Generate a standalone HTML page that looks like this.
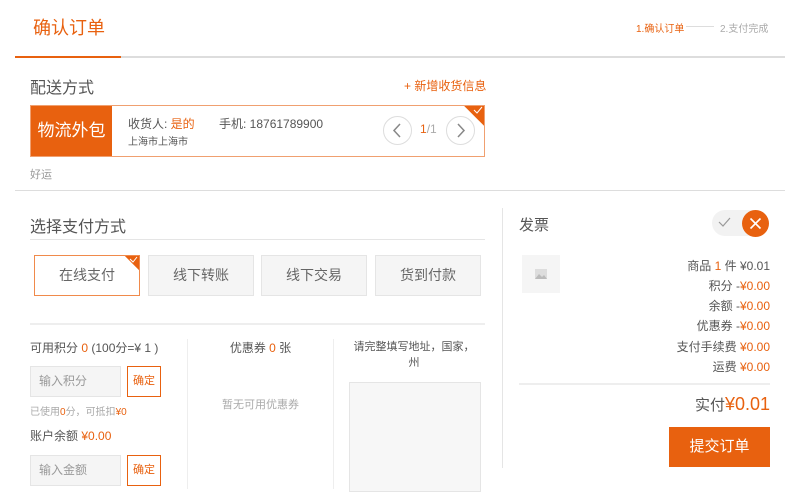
<!DOCTYPE html>
<html><head><meta charset="utf-8"><style>
*{margin:0;padding:0;box-sizing:border-box}
body{width:800px;height:489px;overflow:hidden;background:#fff;font-family:"Liberation Sans","Noto Sans CJK SC",sans-serif;color:#555;position:relative}
.a{position:absolute;white-space:nowrap}
.o{color:#e8610f}
.btn{position:absolute;border:1px solid #e5e5e5;background:#f5f5f5;font-size:14px;color:#666;text-align:center;line-height:38px}
.inp{position:absolute;background:#f5f5f5;border:1px solid #e5e5e5;font-size:12px;color:#999;padding-left:8px;line-height:28px}
.ok{position:absolute;border:1px solid #e8610f;color:#e8610f;font-size:11px;text-align:center;line-height:28px;background:#fff}
.r{position:absolute;right:30px;font-size:12px;color:#555;text-align:right}
</style></head><body>
<div class="a o" style="left:33px;top:14px;font-size:18px">确认订单</div>
<div class="a o" style="left:636px;top:20px;font-size:10px">1.确认订单</div>
<div class="a" style="left:686px;top:26px;width:28px;height:1px;background:#ddd"></div>
<div class="a" style="left:720px;top:20px;font-size:10px;color:#aaa">2.支付完成</div>
<div class="a" style="left:15px;top:56px;width:770px;height:2px;background:#ddd"></div>
<div class="a" style="left:15px;top:56px;width:106px;height:2px;background:#e8610f"></div>

<div class="a" style="left:30px;top:74px;font-size:16px;color:#555">配送方式</div>
<div class="a o" style="left:404px;top:77px;font-size:12px">+ 新增收货信息</div>
<div class="a" style="left:30px;top:105px;width:455px;height:52px;border:1px solid #f0a070;overflow:hidden">
<div class="a" style="left:0;top:0;width:81px;height:50px;background:#e8610f;color:#fff;font-size:17px;line-height:50px;text-align:center">物流外包</div>
<div class="a" style="left:97px;top:9px;font-size:12px;color:#555">收货人: <span class="o">是的</span></div>
<div class="a" style="left:188px;top:9px;font-size:12px;color:#555">手机: 18761789900</div>
<div class="a" style="left:97px;top:27px;font-size:10px;color:#555">上海市上海市</div>
<div class="a" style="left:352px;top:10px;width:29px;height:29px;border:1px solid #ddd;border-radius:50%"><svg width="27" height="27"><path d="M16 7l-6 6.5 6 6.5" fill="none" stroke="#888" stroke-width="1.5"/></svg></div>
<div class="a" style="left:389px;top:16px;font-size:12px"><span class="o">1</span><span style="color:#aaa">/1</span></div>
<div class="a" style="left:415px;top:10px;width:29px;height:29px;border:1px solid #ddd;border-radius:50%"><svg width="27" height="27"><path d="M11 7l6 6.5-6 6.5" fill="none" stroke="#888" stroke-width="1.5"/></svg></div>
<div class="a" style="right:-14px;top:-14px;width:28px;height:28px;background:#e8610f;transform:rotate(45deg)"></div>
<svg class="a" style="right:0;top:0" width="12" height="10"><path d="M2 4l3 3 5-6" fill="none" stroke="#fff" stroke-width="1"/></svg>
</div>
<div class="a" style="left:30px;top:166px;font-size:11px;color:#999">好运</div>
<div class="a" style="left:15px;top:190px;width:770px;height:1px;background:#ddd"></div>

<div class="a" style="left:30px;top:213px;font-size:16px;color:#555">选择支付方式</div>
<div class="a" style="left:30px;top:239px;width:455px;height:1px;background:#e5e5e5"></div>
<div class="btn" style="left:34px;top:255px;width:106px;height:41px;border-color:#f08a4b;background:#fff;overflow:hidden">在线支付<div class="a" style="right:-10px;top:-10px;width:20px;height:20px;background:#e8610f;transform:rotate(45deg)"></div><svg class="a" style="right:0;top:0" width="10" height="8"><path d="M1 3l3 3 4-5" fill="none" stroke="#fff" stroke-width="1"/></svg></div>
<div class="btn" style="left:148px;top:255px;width:106px;height:41px">线下转账</div>
<div class="btn" style="left:261px;top:255px;width:106px;height:41px">线下交易</div>
<div class="btn" style="left:375px;top:255px;width:106px;height:41px">货到付款</div>
<div class="a" style="left:30px;top:323px;width:455px;height:2px;background:#eee"></div>

<div class="a" style="left:30px;top:339px;font-size:12px">可用积分 <span class="o">0</span> (100分=¥ 1 )</div>
<div class="inp" style="left:30px;top:366px;width:91px;height:31px">输入积分</div>
<div class="ok" style="left:127px;top:366px;width:34px;height:31px">确定</div>
<div class="a" style="left:30px;top:403px;font-size:10px;color:#aaa">已使用<span class="o">0</span>分，可抵扣<span class="o">¥0</span></div>
<div class="a" style="left:30px;top:427px;font-size:12px">账户余额 <span class="o">¥0.00</span></div>
<div class="inp" style="left:30px;top:455px;width:91px;height:31px">输入金额</div>
<div class="ok" style="left:127px;top:455px;width:34px;height:31px">确定</div>
<div class="a" style="left:187px;top:339px;width:1px;height:150px;background:#eee"></div>
<div class="a" style="left:333px;top:339px;width:1px;height:150px;background:#eee"></div>
<div class="a" style="left:188px;top:339px;width:145px;text-align:center;font-size:12px">优惠券 <span class="o">0</span> 张</div>
<div class="a" style="left:188px;top:396px;width:145px;text-align:center;font-size:11px;color:#aaa">暂无可用优惠券</div>
<div class="a" style="left:334px;top:339px;width:160px;text-align:center;font-size:11px;line-height:16px;white-space:normal">请完整填写地址，国家，<br>州</div>
<div class="a" style="left:349px;top:382px;width:132px;height:110px;background:#f7f7f7;border:1px solid #e5e5e5"></div>

<div class="a" style="left:502px;top:208px;width:1px;height:260px;background:#e5e5e5"></div>
<div class="a" style="left:519px;top:214px;font-size:15px">发票</div>
<div class="a" style="left:712px;top:210px;width:56px;height:26px;border-radius:13px;background:#f2f2f2"></div>
<svg class="a" style="left:717px;top:216px" width="14" height="12"><path d="M2 6l4 4 7-8" fill="none" stroke="#999" stroke-width="1.2"/></svg>
<div class="a" style="left:742px;top:210px;width:27px;height:27px;border-radius:50%;background:#e8610f"><svg width="27" height="27"><path d="M8.5 8.5l10 10M18.5 8.5l-10 10" stroke="#fff" stroke-width="1.6"/></svg></div>
<div class="a" style="left:522px;top:255px;width:38px;height:38px;background:#f5f5f5"><svg width="38" height="38"><rect x="13" y="14" width="12" height="10" fill="#ddd"/><path d="M13 24l4-5 3 3 2-2 3 4z" fill="#bbb"/></svg></div>
<div class="r" style="top:257px">商品 <span class="o">1</span> 件 ¥0.01</div>
<div class="r" style="top:277px">积分 -<span class="o">¥0.00</span></div>
<div class="r" style="top:297px">余额 -<span class="o">¥0.00</span></div>
<div class="r" style="top:317px">优惠券 -<span class="o">¥0.00</span></div>
<div class="r" style="top:338px">支付手续费 <span class="o">¥0.00</span></div>
<div class="r" style="top:358px">运费 <span class="o">¥0.00</span></div>
<div class="a" style="left:519px;top:383px;width:251px;height:2px;background:#eee"></div>
<div class="r" style="top:394px;font-size:15px">实付<span class="o" style="font-size:18px">¥0.01</span></div>
<div class="a" style="left:669px;top:427px;width:101px;height:40px;background:#e8610f;color:#fff;font-size:15px;text-align:center;line-height:40px">提交订单</div>
</body></html>
